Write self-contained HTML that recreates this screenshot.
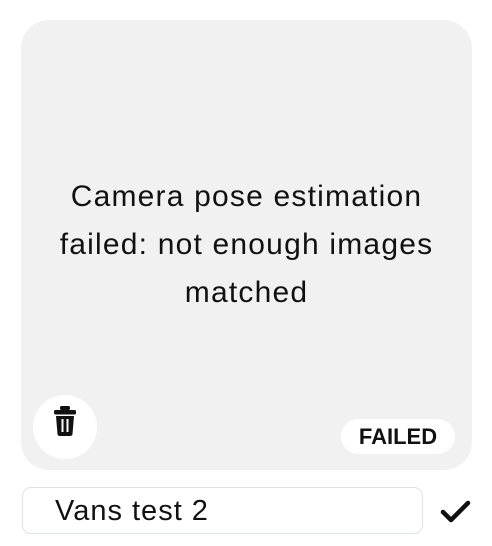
<!DOCTYPE html>
<html><head><meta charset="utf-8"><style>
html,body{margin:0;padding:0;background:#fff;width:492px;height:546px;overflow:hidden;font-family:"Liberation Sans",sans-serif;}
.card{position:absolute;left:21px;top:20px;width:451px;height:450px;background:#f1f1f1;border-radius:28px;}
.msg{position:absolute;left:0;right:0;top:153px;text-align:center;font-size:30px;letter-spacing:1.2px;line-height:48px;color:#111;}
.trash{position:absolute;left:33px;top:395px;width:64px;height:64px;border-radius:50%;background:#fff;}
.pill{position:absolute;left:341px;top:419px;width:114px;height:35px;border-radius:18px;background:#fff;font-weight:bold;font-size:22px;line-height:36px;text-align:center;color:#111;}
.input{position:absolute;left:22px;top:487px;width:399px;height:45px;border:1.5px solid #dde2e8;border-radius:9px;background:#fff;}
.input span{position:absolute;left:32px;top:5px;font-size:29px;letter-spacing:1px;line-height:36px;color:#111;}
</style></head><body>
<div class="card">
  <div class="msg">Camera pose estimation<br>failed: not enough images<br>matched</div>
</div>
<div class="trash">
<svg width="64" height="64" viewBox="0 0 64 64">
  <rect x="27" y="11" width="10" height="4" rx="1.5" fill="#111"/>
  <rect x="21" y="15" width="22" height="4.5" rx="1.5" fill="#111"/>
  <path d="M23 21 H41 L39.5 39 Q39.3 41 37 41 H27 Q24.7 41 24.5 39 Z" fill="#111"/>
  <rect x="28.5" y="24" width="2" height="13" fill="#fff"/>
  <rect x="33.5" y="24" width="2" height="13" fill="#fff"/>
</svg>
</div>
<div class="pill">FAILED</div>
<div class="input"><span>Vans test 2</span></div>
<svg style="position:absolute;left:440px;top:498px" width="32" height="28" viewBox="0 0 32 28">
  <path d="M3 14 L11 22 L28 5" stroke="#111" stroke-width="4.5" fill="none" stroke-linecap="round" stroke-linejoin="round"/>
</svg>
</body></html>
